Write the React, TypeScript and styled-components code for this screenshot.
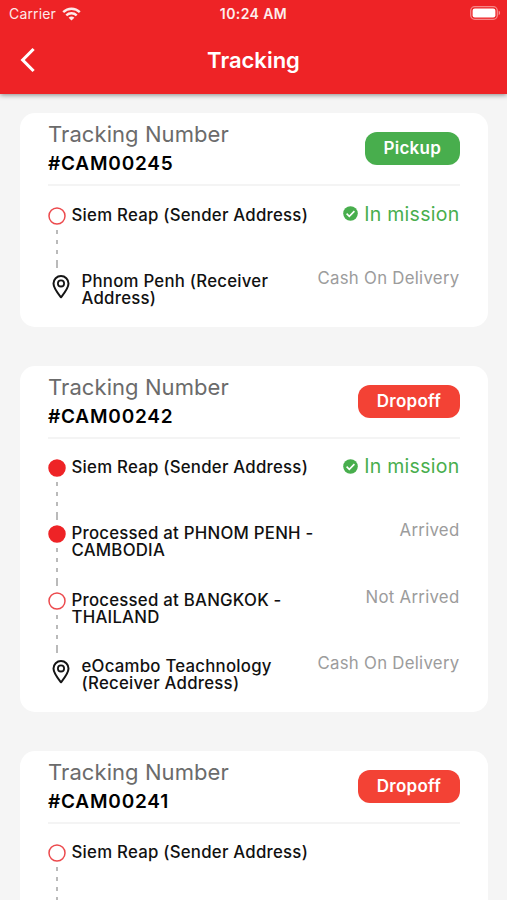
import React from "react";
import styled, { createGlobalStyle } from "styled-components";

const GlobalStyle = createGlobalStyle`
  * { box-sizing: border-box; }
  body { margin: 0; background: #f5f5f5; overflow: hidden; }
`;

const Screen = styled.div`
  height: 900px;
  overflow: hidden;
  display: flex;
  flex-direction: column;
  background: #f5f5f5;
  font-family: Inter, "Liberation Sans", sans-serif;
  color: #111;
`;

const Header = styled.header`
  flex: none;
  height: 94px;
  background: #ee2326;
  color: #fff;
  box-shadow: 0 1px 5px rgba(0, 0, 0, 0.45);
  z-index: 1;
`;

const StatusBar = styled.div`
  height: 27px;
  display: grid;
  grid-template-columns: 1fr auto 1fr;
  align-items: center;
  padding: 0 6px 0 9px;
`;

const Carrier = styled.div`
  display: flex;
  align-items: center;
  gap: 6px;
  font-size: 14px;
  letter-spacing: 0.15px;
  line-height: 27px;
  opacity: 0.9;
`;

const Clock = styled.div`
  margin-left: -3px;
  font-size: 14px;
  font-weight: 600;
  letter-spacing: 0.4px;
  opacity: 0.92;
`;

const BatterySlot = styled.div`
  display: flex;
  justify-content: flex-end;
  margin-top: -1px;
`;

const NavBar = styled.div`
  height: 65px;
  display: grid;
  grid-template-columns: 1fr auto 1fr;
  align-items: center;
  padding: 0 20px;
`;

const BackButton = styled.button`
  display: flex;
  width: 18px;
  padding: 0;
  border: 0;
  background: none;
`;

const Title = styled.h1`
  margin: 0;
  font-size: 22px;
  font-weight: 600;
  line-height: 28px;
  letter-spacing: 0;
`;

const List = styled.main`
  display: flex;
  flex-direction: column;
  gap: 39px;
  padding: 19.4px 19.5px 0 20px;
`;

const Card = styled.article`
  flex: none;
  background: #fff;
  border-radius: 15px;
  padding: 7px 28px 5px;
`;

const CardHeader = styled.div`
  display: flex;
  justify-content: space-between;
  height: 66px;
  border-bottom: 2px solid #f4f4f4;
`;

const Label = styled.div`
  font-size: 22px;
  line-height: 29px;
  letter-spacing: 0.08px;
  color: #6b6b6b;
`;

const Code = styled.div`
  font-size: 19px;
  font-weight: 600;
  line-height: 29px;
  letter-spacing: 0.8px;
  color: #000;
`;

const Badge = styled.span<{ $kind: string }>`
  margin-top: 12px;
  height: 33px;
  padding: 0 18.5px;
  border-radius: 12px;
  background: ${(p) => (p.$kind === "Pickup" ? "#48ae4d" : "#f34235")};
  color: #fff;
  font-size: 17px;
  font-weight: 600;
  line-height: 32px;
  letter-spacing: 0.25px;
`;

const Steps = styled.div`
  padding-top: 20.3px;
`;

const StepRow = styled.div<{ $last: boolean }>`
  display: flex;
  height: ${(p) => (p.$last ? "49px" : "66.2px")};
`;

const Marker = styled.div`
  flex: none;
  width: 18px;
  display: flex;
  flex-direction: column;
  align-items: center;
`;

const PinSlot = styled.div`
  flex: none;
  width: 33.5px;
  padding: 2px 0 0 4px;
`;

const Place = styled.div<{ $last: boolean }>`
  width: ${(p) => (p.$last ? "206px" : "250px")};
  margin-left: ${(p) => (p.$last ? "0" : "5.5px")};
  font-size: 16.8px;
  font-weight: 500;
  line-height: 17px;
  letter-spacing: 0.24px;
  white-space: pre-line;
`;

const Note = styled.div<{ $active: boolean }>`
  margin-left: auto;
  margin-top: ${(p) => (p.$active ? "-5px" : "-7px")};
  display: flex;
  align-items: center;
  gap: 6px;
  height: 24px;
  white-space: nowrap;
  font-size: ${(p) => (p.$active ? "19.5px" : "16.8px")};
  letter-spacing: 0.28px;
  color: ${(p) => (p.$active ? "#48ae4d" : "#9c9c9c")};
`;

const WifiIcon = () => (
  <svg width="19" height="14" viewBox="0 0 19 14" fill="none" stroke="#fff" strokeWidth="2.4">
    <path d="M1.2 5.2C5.8.6 13.2.6 17.8 5.2" />
    <path d="M4.3 8.4c2.9-2.8 7.5-2.8 10.4 0" />
    <path d="M9.5 13.6 6.6 10.7c1.7-1.5 4.1-1.5 5.8 0Z" fill="#fff" stroke="none" />
  </svg>
);

const BatteryIcon = () => (
  <svg width="31" height="14" viewBox="0 0 31 14">
    <rect x=".7" y=".7" width="26.6" height="12.6" rx="4" fill="none" stroke="#fff" strokeOpacity=".45" strokeWidth="1.3" />
    <rect x="2.6" y="2.5" width="22.8" height="9" rx="2.2" fill="#fff" />
    <path d="M28.7 4.8c1.8.6 1.8 3.8 0 4.4Z" fill="#fff" fillOpacity=".5" />
  </svg>
);

const BackIcon = () => (
  <svg width="18" height="26" viewBox="0 0 18 26" fill="none" stroke="#fff" strokeWidth="3.1">
    <path d="M13.6 2 2.7 13l10.9 11" />
  </svg>
);

const CheckIcon = () => (
  <svg width="15" height="15" viewBox="0 0 15 15" fill="none">
    <circle cx="7.5" cy="7.5" r="7.3" fill="#48ae4d" />
    <path d="m3.6 7.7 2.7 2.6 5.1-5.2" stroke="#fff" strokeWidth="1.6" />
  </svg>
);

const DotIcon = ({ filled }: { filled: boolean }) => (
  <svg width="18" height="18" viewBox="0 0 18 18">
    <circle cx="9" cy="9" r="8" fill={filled ? "#ee2326" : "#fff"} stroke={filled ? "#ee2326" : "#ec4a4d"} strokeWidth="1.5" />
  </svg>
);

const PinIcon = () => (
  <svg width="18" height="24" viewBox="0 0 18 24" fill="none" stroke="#151515" strokeWidth="2">
    <path d="M9 22.3C6 18.6 1.5 13.3 1.5 8.6a7.5 7.5 0 0 1 15 0C16.5 13.3 12 18.6 9 22.3Z" strokeLinejoin="round" />
    <circle cx="9" cy="8.4" r="3.1" strokeWidth="1.8" />
  </svg>
);

const Connector = () => (
  <svg width="2" height="48" viewBox="0 0 2 48" stroke="#969696" strokeWidth="1.3">
    <path d="M1 5v4M1 15v4M1 25v4M1 35v8" />
  </svg>
);

type Step = { place: string; note?: string; filled?: boolean; last?: boolean };
type Shipment = { code: string; kind: string; steps: Step[] };

const shipments: Shipment[] = [
  {
    code: "#CAM00245",
    kind: "Pickup",
    steps: [
      { place: "Siem Reap (Sender Address)", note: "In mission" },
      { place: "Phnom Penh (Receiver\nAddress)", note: "Cash On Delivery", last: true },
    ],
  },
  {
    code: "#CAM00242",
    kind: "Dropoff",
    steps: [
      { place: "Siem Reap (Sender Address)", note: "In mission", filled: true },
      { place: "Processed at PHNOM PENH -\nCAMBODIA", note: "Arrived", filled: true },
      { place: "Processed at BANGKOK -\nTHAILAND", note: "Not Arrived" },
      { place: "eOcambo Teachnology\n(Receiver Address)", note: "Cash On Delivery", last: true },
    ],
  },
  {
    code: "#CAM00241",
    kind: "Dropoff",
    steps: [{ place: "Siem Reap (Sender Address)" }],
  },
];

const StepItem = ({ step }: { step: Step }) => {
  const active = step.note === "In mission";
  return (
    <StepRow $last={!!step.last}>
      {step.last ? (
        <PinSlot>
          <PinIcon />
        </PinSlot>
      ) : (
        <Marker>
          <DotIcon filled={!!step.filled} />
          <Connector />
        </Marker>
      )}
      <Place $last={!!step.last}>{step.place}</Place>
      {step.note && (
        <Note $active={active}>
          {active && <CheckIcon />}
          {step.note}
        </Note>
      )}
    </StepRow>
  );
};

export default function App() {
  return (
    <Screen>
      <GlobalStyle />
      <Header>
        <StatusBar>
          <Carrier>
            Carrier <WifiIcon />
          </Carrier>
          <Clock>10:24 AM</Clock>
          <BatterySlot>
            <BatteryIcon />
          </BatterySlot>
        </StatusBar>
        <NavBar>
          <BackButton aria-label="Back">
            <BackIcon />
          </BackButton>
          <Title>Tracking</Title>
        </NavBar>
      </Header>
      <List>
        {shipments.map((s) => (
          <Card key={s.code}>
            <CardHeader>
              <div>
                <Label>Tracking Number</Label>
                <Code>{s.code}</Code>
              </div>
              <Badge $kind={s.kind}>{s.kind}</Badge>
            </CardHeader>
            <Steps>
              {s.steps.map((step) => (
                <StepItem key={step.place} step={step} />
              ))}
            </Steps>
          </Card>
        ))}
      </List>
    </Screen>
  );
}
